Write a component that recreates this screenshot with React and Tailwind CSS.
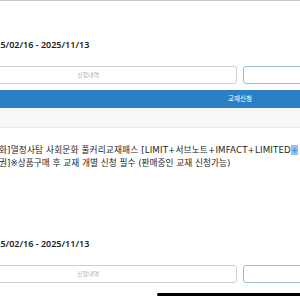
import React from 'react';

const font = { fontFamily: '"Noto Sans", "Noto Sans CJK KR", sans-serif' };
const titleFont = { fontFamily: '"DejaVu Sans", "Noto Sans CJK KR", sans-serif' };

const Buttons = () => (
  <div className="flex gap-[6px] mt-[15px]">
    <div className="w-[298px] h-[18px] border border-[#cfcfcf] rounded-[3px] flex items-center justify-center text-[6px] text-[#b0b0b0]">
      신청내역
    </div>
    <div className="w-[298px] h-[18px] border border-[#9dbccf] rounded-[3px]"></div>
  </div>
);

const Period = () => (
  <p className="pl-[46px] text-[9px] leading-[13px] font-semibold text-[#222]">
    2025/02/16 - 2025/11/13
  </p>
);

export default function App() {
  return (
    <div className="w-[300px] h-[300px] overflow-hidden bg-white" style={font}>
      <div className="ml-[-61px] w-[602px] flex flex-col">
        <div className="border-t border-[#c8c8c8] pt-[37px]">
          <Period />
          <Buttons />
          <div className="mt-[6px] h-[18px] bg-[#2b7fc4] flex items-center justify-center text-[6.5px] text-white">
            교재신청
          </div>
        </div>
        <div className="h-[20px] bg-[#f7f7f7] border-b border-[#e8e8e8]"></div>

        <div className="pt-[16px]">
          <div className="pl-[60px] text-[8.7px] leading-[13px] text-[#262626] whitespace-nowrap" style={titleFont}>
            <p className="tracking-[0.13px]">
              화]열정사탐 사회문화 풀커리교재패스 [LIMIT+서브노트+IMFACT+LIMITED<span className="bg-[#8fc3f0] text-[#2b7fc4]">+</span>
            </p>
            <p>권]※상품구매 후 교재 개별 신청 필수 (판매중인 교재 신청가능)</p>
          </div>
          <div className="mt-[67px]">
            <Period />
          </div>
          <Buttons />
          <div className="mt-[10px] ml-[218px] h-[3px] bg-black rounded-l-full"></div>
        </div>
      </div>
    </div>
  );
}
